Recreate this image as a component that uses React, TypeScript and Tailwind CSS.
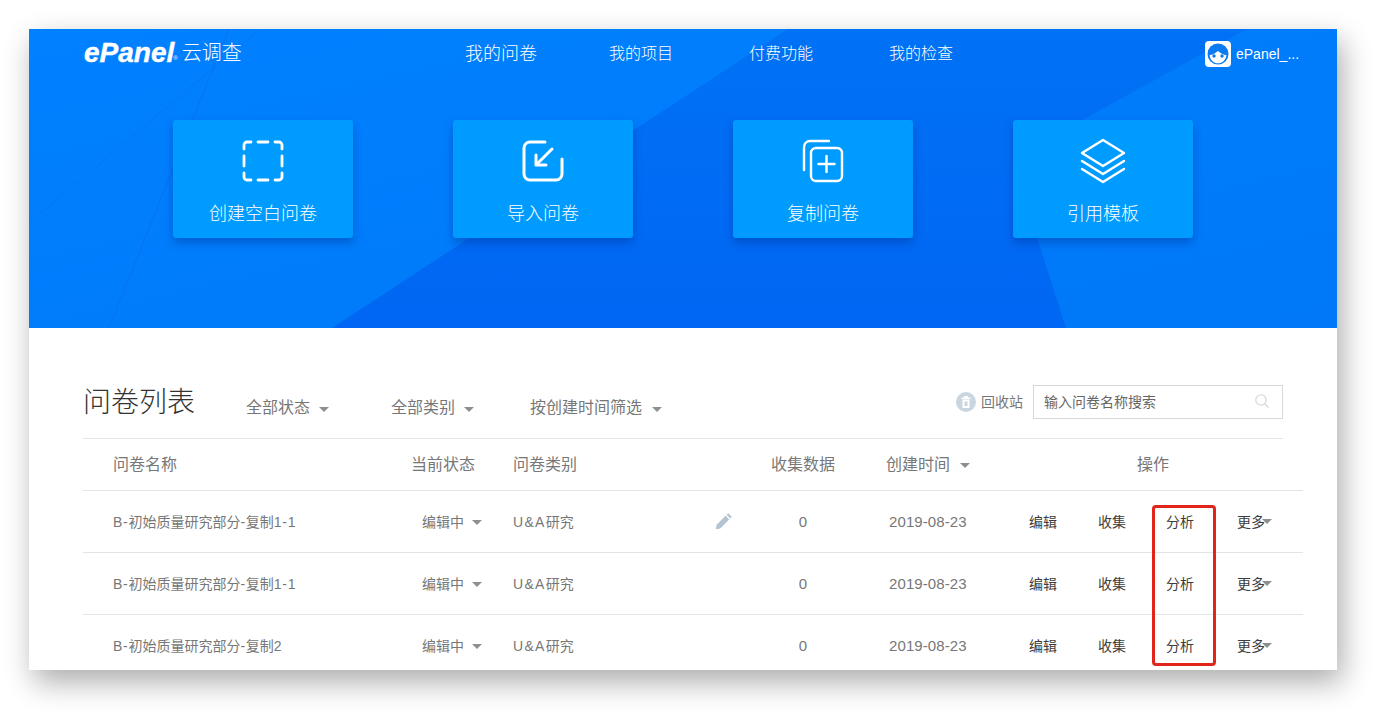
import React from "react";

const F = { fontFamily: '"Liberation Sans","Noto Sans CJK SC",sans-serif' };

function Caret({ className = "" }: { className?: string }) {
  return <span className={"inline-block w-0 h-0 border-x-[5px] border-x-transparent border-t-[5px] border-t-[#8f8f8f] " + className} />;
}

function Card({ label, children }: { label: string; children: React.ReactNode }) {
  return (
    <div className="w-[180px] h-[118px] rounded-[3px] bg-[#009bff] shadow-[0_5px_10px_rgba(0,50,150,0.42)] flex flex-col items-center pt-[18px] text-white">
      <div className="h-[46px] w-[46px] flex items-center justify-center">{children}</div>
      <div className="mt-[17px] text-[18px] leading-[26px] font-light">{label}</div>
    </div>
  );
}

const cols = "grid grid-cols-[298px_102px_203px_55px_115px_143px_1fr] items-center";

function L({ children }: { children: React.ReactNode }) {
  return <span className="tracking-[0.7px]">{children}</span>;
}

function Row({ name, pencil }: { name: React.ReactNode; pencil?: boolean }) {
  return (
    <div className={cols + " pl-[30px] pt-[2px] h-[62px] border-b border-[#e2e4e6] text-[14px] text-[#777]"}>
      <div>{name}</div>
      <div className="pl-[11px] flex items-center gap-[8px]"><span>编辑中</span><Caret /></div>
      <div><span className="tracking-[1.3px]">U&amp;A</span>研究</div>
      <div>
        {pencil && (
          <svg width="18" height="18" viewBox="0 0 18 18" className="block -mt-[3px] -ml-[1px]">
            <path d="M13.200 1.200l3.600 3.600-1.600 1.600-3.600-3.600zM10.600 3.800l3.600 3.600L5.200 16.400 .8 17.200l.8-4.400z" fill="#b4c3d0" />
          </svg>
        )}
      </div>
      <div className="w-[64px] text-center text-[15px]">0</div>
      <div className="pl-[3px] text-[15px] tracking-[0.1px]">2019-08-23</div>
      <div className="relative h-full flex items-center text-[#3c3c3c]">
        <span className="w-[69px]">编辑</span>
        <span className="w-[68px]">收集</span>
        <span className="w-[71px]">分析</span>
        <span className="w-[28px]">更多</span>
        <Caret className="-ml-[3px] -mt-[3px]" />
      </div>
    </div>
  );
}

export default function App() {
  return (
    <div className="h-[722px] w-[1390px] bg-white overflow-hidden pl-[29px] pt-[29px]" style={F}>
      <div className="relative w-[1308px] h-[641px] bg-white overflow-hidden shadow-[5px_12px_28px_rgba(0,0,0,0.33)]">
        <header className="relative h-[299px] overflow-hidden bg-gradient-to-br from-[#0081ff] to-[#0078f8]">
          <svg className="absolute inset-0" width="1308" height="299" viewBox="0 0 1308 299">
            <defs>
              <linearGradient id="panel" x1="0" y1="0" x2="0" y2="1">
                <stop offset="0" stopColor="#0072f5" />
                <stop offset="1" stopColor="#0066f3" />
              </linearGradient>
            </defs>
            <polygon points="303,299 759,0 1218,0 983,130 1037,299" fill="url(#panel)" />
            <line x1="80" y1="299" x2="200" y2="0" stroke="#0a6ff2" strokeWidth="1" opacity="0.8" />
            <line x1="0" y1="194" x2="230" y2="1" stroke="#0a6ff2" strokeWidth="1" opacity="0.5" />
          </svg>
          <div className="relative">
            <div className="h-[50px] flex items-center text-white">
              <div className="ml-[55px] w-[381px] flex items-center -mt-[2px]">
                <span className="text-[28px] font-bold italic leading-none [-webkit-text-stroke:0.4px_white]">ePanel</span>
                <span className="text-[6px] self-end mb-[5px] -ml-[1px] mr-[4px]">®</span>
                <span className="text-[20px] font-light">云调查</span>
              </div>
              <span className="w-[144px] text-[18px] font-light">我的问卷</span>
              <span className="w-[140px] text-[16px] font-light">我的项目</span>
              <span className="w-[140px] text-[16px] font-light">付费功能</span>
              <span className="w-[316px] text-[16px] font-light">我的检查</span>
              <div className="flex items-center gap-[5px]">
                <svg width="26" height="26" viewBox="0 0 26 26" className="block">
                  <rect width="26" height="26" rx="4" fill="#fff" />
                  <circle cx="13" cy="13" r="10.500" fill="#0a7bf0" />
                  <path d="M4.600 14c2 .2 5-1 8.400-4 3.400 3 6.400 4.200 8.400 4-.3 4.800-4 8.300-8.400 8.300S4.900 18.800 4.600 14z" fill="#fff" />
                  <circle cx="9" cy="15" r="1.700" fill="#0a7bf0" />
                  <circle cx="17" cy="15" r="1.700" fill="#0a7bf0" />
                </svg>
                <span className="text-[14px]">ePanel_...</span>
              </div>
            </div>
            <div className="mt-[41px] ml-[144px] flex gap-[100px]">
              <Card label="创建空白问卷">
                <svg width="42" height="42" viewBox="0 0 42 42" fill="none" stroke="#fff" strokeWidth="2.800" strokeLinecap="round">
                  <path d="M2 9V5a3 3 0 0 1 3-3h4M16 2h10M33 2h4a3 3 0 0 1 3 3v4M40 16v10M40 33v4a3 3 0 0 1-3 3h-4M26 40H16M9 40H5a3 3 0 0 1-3-3v-4M2 26V16" />
                </svg>
              </Card>
              <Card label="导入问卷">
                <svg width="42" height="42" viewBox="0 0 42 42" fill="none" stroke="#fff" strokeWidth="3" strokeLinecap="round" strokeLinejoin="round">
                  <path d="M23 2H8a6 6 0 0 0-6 6v26a6 6 0 0 0 6 6h26a6 6 0 0 0 6-6V19" />
                  <path d="M30 9L14 25M14 15v10h10" />
                </svg>
              </Card>
              <Card label="复制问卷">
                <svg width="44" height="44" viewBox="0 0 44 44" fill="none" stroke="#fff" strokeWidth="2.400" strokeLinecap="round" strokeLinejoin="round">
                  <path d="M28 2H9a6 6 0 0 0-6 6v23" />
                  <rect x="10" y="9" width="31" height="33" rx="5" />
                  <path d="M25.500 17v16M17.500 25h16" />
                </svg>
              </Card>
              <Card label="引用模板">
                <svg width="46" height="46" viewBox="0 0 46 46" fill="none" stroke="#fff" strokeWidth="2.400" strokeLinejoin="round" strokeLinecap="round">
                  <path d="M23 2L44 15 23 28 2 15z" />
                  <path d="M2 23l21 13 21-13M2 31l21 13 21-13" />
                </svg>
              </Card>
            </div>
          </div>
        </header>

        <section className="pl-[54px]">
          <div className="w-[1200px] h-[111px] border-b border-[#e2e4e6] flex items-center pt-[40px] text-[16px] text-[#777]">
            <span className="w-[163px] text-[28px] font-light text-[#333]">问卷列表</span>
            <div className="flex items-center mt-[10px]">
              <span>全部状态</span>
              <Caret className="ml-[9px] mr-[62px] mt-[2px]" />
              <span>全部类别</span>
              <Caret className="ml-[9px] mr-[56px] mt-[2px]" />
              <span>按创建时间筛选</span>
              <Caret className="ml-[10px] mt-[2px]" />
            </div>
            <div className="ml-auto flex items-center -mt-[2px]">
              <svg width="20" height="20" viewBox="0 0 20 20" className="block mr-[5px]">
                <circle cx="10" cy="10" r="10" fill="#c9d6e0" />
                <path d="M5.500 5.500h9v1.400h-9zM8 4h4v1.500H8zM6.500 7.500h7V16h-7z" fill="#fff" />
                <rect x="8.500" y="9.500" width="3" height="4.500" fill="#c9d6e0" />
              </svg>
              <span className="w-[52px] text-[14px]">回收站</span>
              <div className="w-[250px] h-[34px] border border-[#d5d9dd] flex items-center justify-between pl-[10px] pr-[13px] text-[14px] text-[#666]">
                <span>输入问卷名称搜索</span>
                <svg width="14" height="14" viewBox="0 0 14 14" fill="none" stroke="#cfd4d9" strokeWidth="1.100" className="block -mt-[2px]">
                  <circle cx="6" cy="6" r="5.200" />
                  <path d="M9.800 9.800L13.500 13.500" />
                </svg>
              </div>
            </div>
          </div>
          <div className="w-[1220px]">
            <div className={cols + " pl-[30px] h-[52px] border-b border-[#e2e4e6] text-[16px] text-[#777] w-full"}>
              <div>问卷名称</div>
              <div>当前状态</div>
              <div className="col-span-2">问卷类别</div>
              <div>收集数据</div>
              <div className="flex items-center gap-[10px]"><span>创建时间</span><Caret className="mt-[2px]" /></div>
              <div className="pl-[108px]">操作</div>
            </div>
            <Row name={<><L>B-</L>初始质量研究部分<L>-</L>复制<L>1-1</L></>} pencil />
            <Row name={<><L>B-</L>初始质量研究部分<L>-</L>复制<L>1-1</L></>} />
            <Row name={<><L>B-</L>初始质量研究部分<L>-</L>复制<L>2</L></>} />
          </div>
        </section>

        <div className="absolute left-[1123px] top-[476px] w-[64px] h-[161px] border-[3px] border-[#e1251b] rounded-[4px]" />
      </div>
    </div>
  );
}
